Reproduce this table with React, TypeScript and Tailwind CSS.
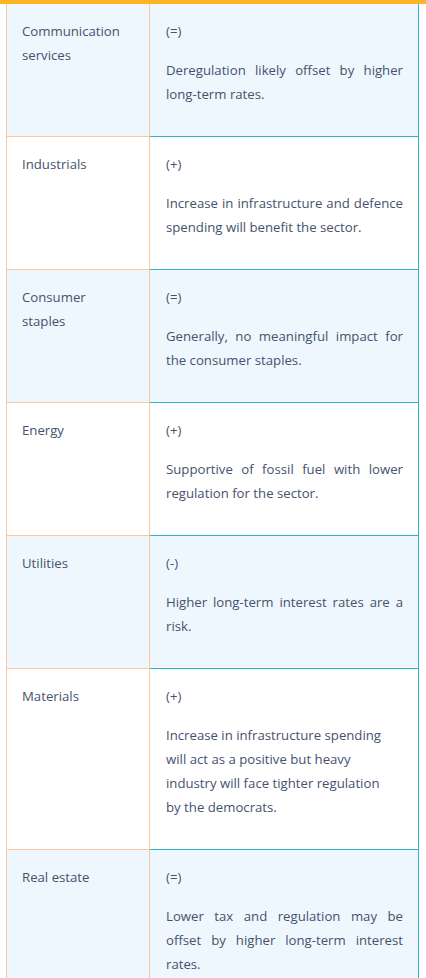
import React from "react";

const sectors = [
  {
    name: "Communication services",
    sign: "(=)",
    note: "Deregulation likely offset by higher long-term rates.",
  },
  {
    name: "Industrials",
    sign: "(+)",
    note: "Increase in infrastructure and defence spending will benefit the sector.",
  },
  {
    name: "Consumer staples",
    sign: "(=)",
    note: "Generally, no meaningful impact for the consumer staples.",
  },
  {
    name: "Energy",
    sign: "(+)",
    note: "Supportive of fossil fuel with lower regulation for the sector.",
  },
  {
    name: "Utilities",
    sign: "(-)",
    note: "Higher long-term interest rates are a risk.",
  },
  {
    name: "Materials",
    sign: "(+)",
    note: "Increase in infrastructure spending will act as a positive but heavy industry will face tighter regulation by\u00a0the democrats.",
    left: true,
  },
  {
    name: "Real estate",
    sign: "(=)",
    note: "Lower tax and regulation may be offset by higher long-term interest rates.",
  },
];

const App = () => {
  return (
    <div
      className="min-h-screen bg-white text-[13.2px] leading-[24px] text-[#46526d]"
      style={{ fontFamily: '"Open Sans", "Noto Sans", sans-serif' }}
    >
      <div className="h-[4px] bg-[#fdb424]" />

      <div className="ml-[6px] w-[413px]">
        {sectors.map((s, i) => (
          <div
            key={s.name}
            className={`grid grid-cols-[144px_1fr] ${i % 2 === 0 ? "bg-[#eff7fe]" : "bg-white"}`}
          >
            {/* sector name */}
            <div className="border-l border-r border-b border-[#fcc7a1] pl-[15px] pr-[18px] pt-[15px]">
              {s.name}
            </div>

            {/* outlook */}
            <div className="border-r border-b border-[#2db6c9] pl-[16px] pr-[15px] pt-[15px] pb-[15px]">
              <p className="mb-[15px]">{s.sign}</p>
              <p className={s.left ? "mb-[15px] text-left" : "mb-[15px] text-justify"}>{s.note}</p>
            </div>
          </div>
        ))}
      </div>
    </div>
  );
};

export default App;
